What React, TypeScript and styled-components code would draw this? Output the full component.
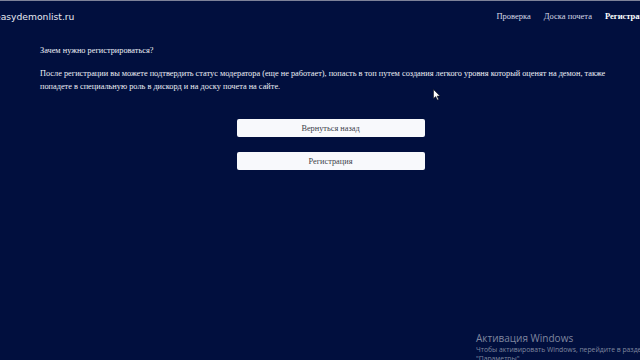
import styled, { createGlobalStyle } from "styled-components"

const GlobalStyle = createGlobalStyle`
  html, body {
    margin: 0;
    padding: 0;
    width: 640px;
    height: 360px;
    overflow: hidden;
    background: #010f3e;
  }
`

const Page = styled.div`
  position: relative;
  width: 640px;
  height: 360px;
  overflow: hidden;
  background: #010f3e;
  border-top: 1px solid #7d8299;
  box-sizing: border-box;
  font-family: "Liberation Serif", "Times New Roman", serif;
  color: #ffffff;
`

const Header = styled.header`
  display: flex;
  align-items: center;
  justify-content: space-between;
  height: 30px;
  margin-left: -5px;
  margin-right: -14px;
`

const Logo = styled.div`
  font-family: "DejaVu Sans", Verdana, sans-serif;
  font-size: 9.2px;
  color: #e8eaf2;
`

const Nav = styled.nav`
  display: flex;
  gap: 13px;
  align-items: center;
`

const NavLink = styled.a<{ $active?: boolean }>`
  font-size: 8.5px;
  color: ${(p) => (p.$active ? "#ffffff" : "#d6d9e6")};
  font-weight: ${(p) => (p.$active ? 700 : 400)};
  text-decoration: none;
  white-space: nowrap;
`

const Content = styled.main`
  padding: 13px 30px 0 40px;
  font-size: 8.3px;
  color: #eef0f6;
`

const Question = styled.p`
  margin: 0 0 10px;
  line-height: 13px;
`

const Paragraph = styled.p`
  margin: 0;
  line-height: 13px;
`

const Buttons = styled.div`
  display: flex;
  flex-direction: column;
  align-items: center;
  gap: 15px;
  margin-top: 26px;
  padding-left: 11px;
`

const Button = styled.button`
  width: 188px;
  height: 18px;
  background: #f8f9fc;
  border: none;
  border-radius: 2px;
  font-family: "Liberation Serif", "Times New Roman", serif;
  font-size: 8.3px;
  color: #3c3f4a;
  cursor: pointer;
  padding: 0;
`

const Cursor = styled.svg`
  position: absolute;
  left: 433px;
  top: 88px;
`

const Watermark = styled.div`
  position: absolute;
  left: 476px;
  top: 330px;
  font-family: "Open Sans", "DejaVu Sans", sans-serif;
  color: #7f869f;
  white-space: nowrap;
`

const WatermarkTitle = styled.div`
  font-size: 10px;
  line-height: 14px;
`

const WatermarkText = styled.div`
  font-size: 6.8px;
  line-height: 9px;
`

export default function App() {
  return (
    <>
      <GlobalStyle />
      <Page>
        <Header>
          <Logo>easydemonlist.ru</Logo>
          <Nav>
            <NavLink>Проверка</NavLink>
            <NavLink>Доска почета</NavLink>
            <NavLink $active>Регистрация</NavLink>
          </Nav>
        </Header>
        <Content>
          <Question>Зачем нужно регистрироваться?</Question>
          <Paragraph>
            После регистрации вы можете подтвердить статус модератора (еще не работает), попасть в топ путем создания
            легкого уровня который оценят на демон, также попадете в специальную роль в дискорд и на доску почета на
            сайте.
          </Paragraph>
          <Buttons>
            <Button>Вернуться назад</Button>
            <Button>Регистрация</Button>
          </Buttons>
        </Content>
        <Cursor width="8" height="12" viewBox="0 0 8 12">
          <path d="M0.5 0.5 L0.5 9.5 L2.7 7.6 L4.3 11 L5.6 10.4 L4.1 7.1 L7 7.1 Z" fill="#ffffff" stroke="#1a1a1a" strokeWidth="0.6" />
        </Cursor>
        <Watermark>
          <WatermarkTitle>Активация Windows</WatermarkTitle>
          <WatermarkText>Чтобы активировать Windows, перейдите в раздел</WatermarkText>
          <WatermarkText>"Параметры".</WatermarkText>
        </Watermark>
      </Page>
    </>
  )
}
